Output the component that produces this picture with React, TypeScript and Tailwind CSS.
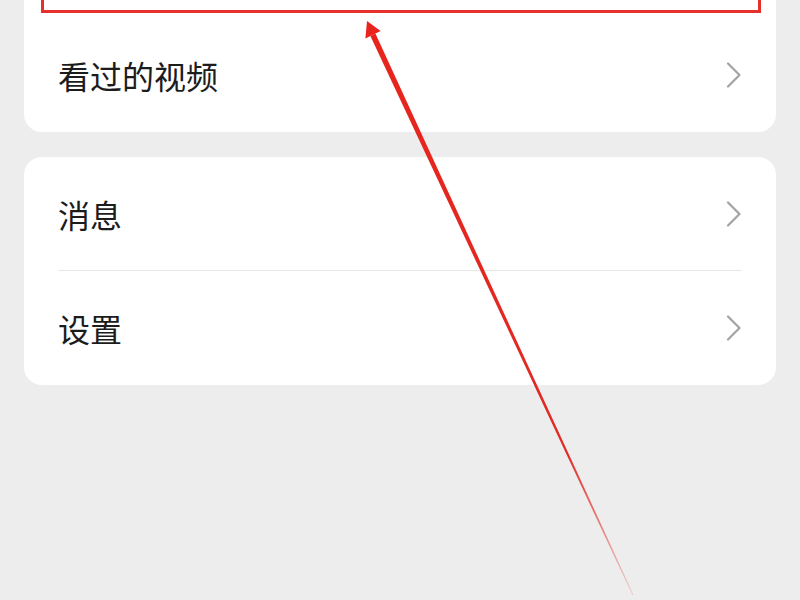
const font = { fontFamily: '"Noto Sans CJK SC", "Noto Sans", sans-serif' };

function Chevron() {
  return (
    <svg width="16" height="26" viewBox="0 0 16 26" className="shrink-0">
      <polyline points="2,1.5 13.5,13 2,24.5" fill="none" stroke="#a3a3a3" strokeWidth="2.2" strokeLinecap="round" strokeLinejoin="round" />
    </svg>
  );
}

function Row({ label, divider }: { label: string; divider?: boolean }) {
  return (
    <div className="px-[34px]">
      <div
        className={
          'h-[114px] flex items-center justify-between ' +
          (divider ? 'border-b border-[#e6e6e6]' : '')
        }
      >
        <span className="text-[32px] leading-none text-[#1c1c1c]">{label}</span>
        <Chevron />
      </div>
    </div>
  );
}

export default function App() {
  return (
    <div className="relative w-[800px] h-[600px] overflow-hidden bg-[#ededed]" style={font}>
      <div className="flex flex-col gap-[25px] px-[24px]">
        {/* top card, cut off by the screen edge */}
        <div className="bg-white rounded-b-[18px]">
          <div className="h-[18px] px-[17px] pr-[15px]">
            <div className="h-[13px] border-x-[3px] border-b-[3px] border-[#e5302b]" />
          </div>
          <Row label="看过的视频" />
        </div>

        <div className="bg-white rounded-[18px]">
          <Row label="消息" divider />
          <Row label="设置" />
        </div>
      </div>

      {/* annotation arrow */}
      <svg className="absolute inset-0 pointer-events-none" width="800" height="600" viewBox="0 0 800 600">
        <defs>
          <linearGradient id="fade" x1="367" y1="22" x2="633" y2="595" gradientUnits="userSpaceOnUse">
            <stop offset="0" stopColor="#e8241c" />
            <stop offset="0.75" stopColor="#e02a24" />
            <stop offset="1" stopColor="#e02a24" stopOpacity="0.15" />
          </linearGradient>
        </defs>
        <polygon points="370.4,36 375.4,33.6 633.5,594.8 632.5,595.2" fill="url(#fade)" />
        <polygon points="367,21 380.6,31 365.4,38.4" fill="#e8241c" />
      </svg>
    </div>
  );
}
